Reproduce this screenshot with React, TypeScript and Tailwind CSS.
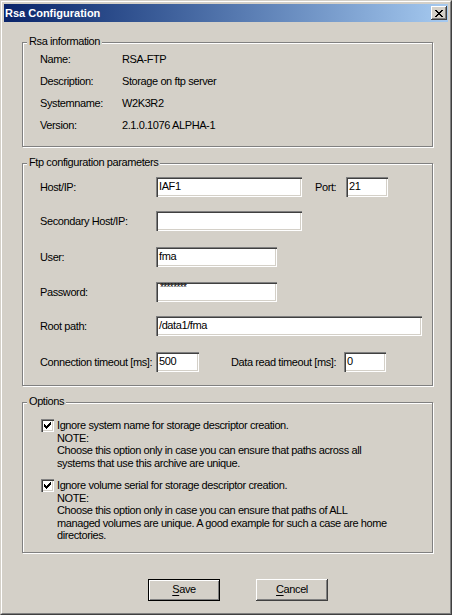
import React from 'react';

const raised = 'shadow-[inset_-1px_-1px_0_#404040,inset_1px_1px_0_#ffffff,inset_-2px_-2px_0_#808080]';
const sunken =
  'shadow-[inset_1px_1px_0_#808080,inset_2px_2px_0_#404040,inset_-1px_-1px_0_#ffffff,inset_-2px_-2px_0_#d4d0c8]';

const Group: React.FC<{ label: string; className?: string; children: React.ReactNode }> = ({
  label,
  className = '',
  children,
}) => (
  <div
    className={`relative w-[411px] border border-[#808080] shadow-[inset_1px_1px_0_#ffffff,1px_1px_0_#ffffff] ${className}`}
  >
    <span className="absolute left-[4px] top-[-8px] bg-[#d4d0c8] px-[2px] leading-[13px] whitespace-nowrap">
      {label}
    </span>
    {children}
  </div>
);

const TextBox: React.FC<{ value: string; width: string }> = ({ value, width }) => (
  <div className={`h-[20px] ${width} bg-white ${sunken} pl-[3px] pt-[3px] leading-[13px] whitespace-nowrap overflow-hidden`}>
    {value}
  </div>
);

const CheckBox: React.FC = () => (
  <div className={`w-[13px] h-[13px] shrink-0 bg-white ${sunken}`}>
    <svg width="13" height="13" viewBox="0 0 13 13" shapeRendering="crispEdges">
      <path
        fill="#000"
        d="M9 3h1v1h-1z M8 4h2v1h-2z M3 5h1v1h-1z M7 5h3v1h-3z M3 6h2v1h-2z M6 6h3v1h-3z M3 7h5v1h-5z M4 8h3v1h-3z M5 9h1v1h-1z"
      />
    </svg>
  </div>
);

const InfoRow: React.FC<{ label: string; value: string }> = ({ label, value }) => (
  <div className="flex h-[22px] items-center pl-[17px]">
    <span className="w-[82px]">{label}</span>
    <span className="whitespace-nowrap">{value}</span>
  </div>
);

const FtpRow: React.FC<{ label: string; className?: string; children: React.ReactNode }> = ({
  label,
  className = '',
  children,
}) => (
  <div className={`flex h-[20px] items-center pl-[17px] ${className}`}>
    <span className="w-[116px] whitespace-nowrap">{label}</span>
    {children}
  </div>
);

const OptionBlock: React.FC<{ lines: string[]; className?: string }> = ({ lines, className = '' }) => (
  <div className={`flex pl-[18px] ${className}`}>
    <CheckBox />
    <div className="ml-[3px] leading-[12.5px]">
      {lines.map((l) => (
        <div key={l} className="whitespace-nowrap">
          {l}
        </div>
      ))}
    </div>
  </div>
);

export default function App() {
  return (
    <div
      className="w-[452px] h-[615px] bg-[#d4d0c8] border border-t-[#d4d0c8] border-l-[#d4d0c8] border-r-[#404040] border-b-[#404040] text-black text-[11px] tracking-[-0.4px]"
      style={{ fontFamily: '"Liberation Sans", Arial, sans-serif' }}
    >
      <div className="h-full border border-t-white border-l-white border-r-[#808080] border-b-[#808080] p-[2px] flex flex-col">
        {/* title bar */}
        <div className="flex h-[18px] items-center justify-between bg-linear-to-r from-[#0a246a] to-[#a6caf0] pl-[1px] pr-[1px]">
          <span className="font-bold text-white tracking-normal leading-[13px]">Rsa Configuration</span>
          <button type="button" className={`w-[16px] h-[14px] bg-[#d4d0c8] ${raised} flex items-center justify-center`}>
            <svg width="8" height="7" viewBox="0 0 8 7" shapeRendering="crispEdges">
              <path
                fill="#000"
                d="M0 0h2v1h-2z M6 0h2v1h-2z M1 1h2v1h-2z M5 1h2v1h-2z M2 2h4v1h-4z M3 3h2v1h-2z M2 4h4v1h-4z M1 5h2v1h-2z M5 5h2v1h-2z M0 6h2v1h-2z M6 6h2v1h-2z"
              />
            </svg>
          </button>
        </div>

        <div className="flex flex-col pl-[18px]">
          <Group label="Rsa information" className="mt-[20px] pt-[5px] pb-[10px]">
            <InfoRow label="Name:" value="RSA-FTP" />
            <InfoRow label="Description:" value="Storage on ftp server" />
            <InfoRow label="Systemname:" value="W2K3R2" />
            <InfoRow label="Version:" value="2.1.0.1076 ALPHA-1" />
          </Group>

          <Group label="Ftp configuration parameters" className="mt-[16px] pt-[13px] pb-[13px]">
            <FtpRow label="Host/IP:">
              <TextBox value="IAF1" width="w-[146px]" />
              <span className="ml-[13px] w-[31px]">Port:</span>
              <TextBox value="21" width="w-[42px]" />
            </FtpRow>
            <FtpRow label="Secondary Host/IP:" className="mt-[14px]">
              <TextBox value="" width="w-[146px]" />
            </FtpRow>
            <FtpRow label="User:" className="mt-[16px]">
              <TextBox value="fma" width="w-[121px]" />
            </FtpRow>
            <FtpRow label="Password:" className="mt-[15px]">
              <div className={`h-[20px] w-[121px] bg-white ${sunken} pl-[4px] pt-[1px] leading-[10px] text-[10px] tracking-[-0.6px]`}>
                ********
              </div>
            </FtpRow>
            <FtpRow label="Root path:" className="mt-[14px]">
              <TextBox value="/data1/fma" width="w-[266px]" />
            </FtpRow>
            <FtpRow label="Connection timeout [ms]:" className="mt-[16px]">
              <TextBox value="500" width="w-[43px]" />
              <span className="ml-[32px] w-[113px] whitespace-nowrap">Data read timeout [ms]:</span>
              <TextBox value="0" width="w-[42px]" />
            </FtpRow>
          </Group>

          <Group label="Options" className="mt-[16px] pt-[16px] pb-[10px]">
            <OptionBlock
              lines={[
                'Ignore system name for storage descriptor creation.',
                'NOTE:',
                'Choose this option only in case you can ensure that paths across all',
                'systems that use this archive are unique.',
              ]}
            />
            <OptionBlock
              className="mt-[10px]"
              lines={[
                'Ignore volume serial for storage descriptor creation.',
                'NOTE:',
                'Choose this option only in case you can ensure that paths of ALL',
                'managed volumes are unique. A good example for such a case are home',
                'directories.',
              ]}
            />
          </Group>

          <div className="mt-[26px] flex pl-[126px]">
            <button
              type="button"
              className="w-[72px] h-[22px] border border-black shadow-[inset_1px_1px_0_#ffffff,inset_-1px_-1px_0_#808080] bg-[#d4d0c8] leading-[13px]"
            >
              <span className="underline underline-offset-2">S</span>ave
            </button>
            <button
              type="button"
              className={`ml-[36px] w-[72px] h-[22px] ${raised} bg-[#d4d0c8] leading-[13px]`}
            >
              <span className="underline underline-offset-2">C</span>ancel
            </button>
          </div>
        </div>
      </div>
    </div>
  );
}
